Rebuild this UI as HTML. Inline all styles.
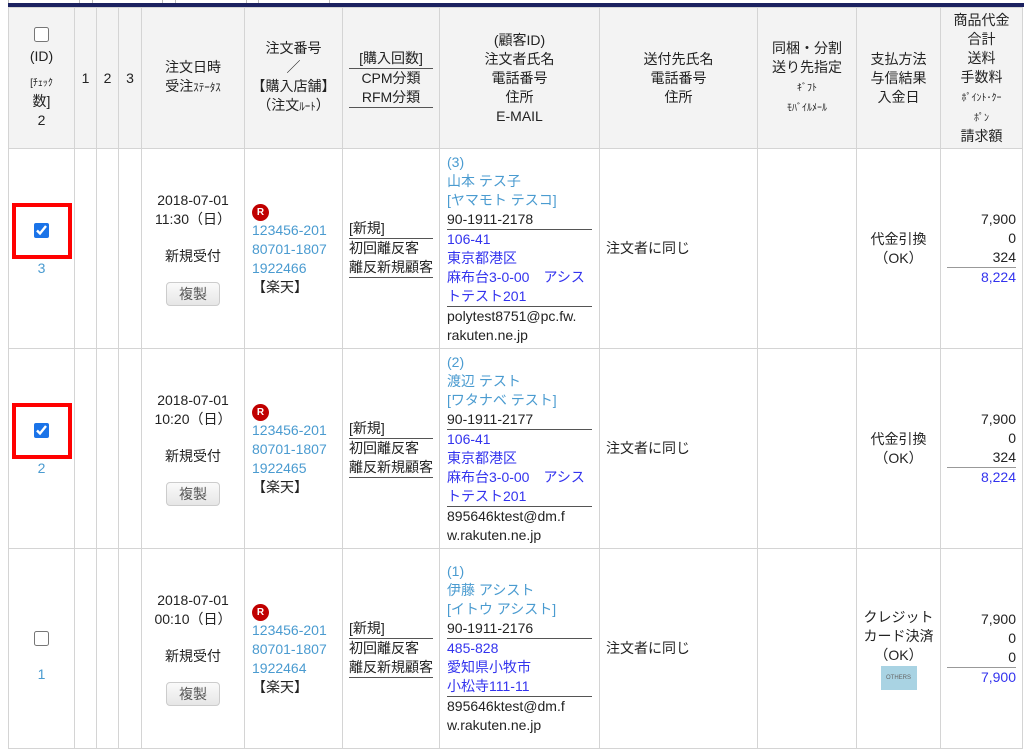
<!DOCTYPE html>
<html><head><meta charset="utf-8"><style>
*{margin:0;padding:0;box-sizing:border-box}
body{width:1024px;height:751px;overflow:hidden;background:#fff;font-family:"Liberation Sans","Noto Sans CJK JP",sans-serif;font-size:14px;color:#222;position:relative}
.tb{position:absolute;top:-2px;height:6px;border:1px solid #bbb;border-top:none;background:#fff}
.bar{position:absolute;left:8px;top:3px;width:1016px;height:4px;background:#1b2160}
table{position:absolute;left:8px;top:7px;border-collapse:collapse;table-layout:fixed;width:1014px}
td,th{border:1px solid #d4d4d4;vertical-align:middle;line-height:19px;font-weight:normal}
th{background:#f3f3f3;text-align:center;height:141px}
td{height:200px}
.c{text-align:center}
.sm{font-size:10px;line-height:16px}
.lb{color:#4a9bd0}
.bl{color:#3333ee}
.ul{border-bottom:1px solid #555}
.r{display:inline-block;width:17px;height:17px;border-radius:50%;background:#c00000;color:#fff;font-size:10px;font-weight:bold;text-align:center;line-height:17px}
.btn{display:inline-block;width:54px;height:24px;border:1px solid #ccc;border-radius:4px;background:linear-gradient(#fafafa,#e6e6e6);color:#555;line-height:22px;text-align:center}
.cb{width:15px;height:15px;accent-color:#1a73e8;margin:0}
.red{display:inline-block;width:60px;height:56px;border:4px solid #f00;padding-top:16px}
.s1{height:18px}.s2{height:16px}
</style></head><body>
<div class="tb" style="left:8px;width:72px"></div>
<div class="tb" style="left:92px;width:71px"></div>
<div class="tb" style="left:175px;width:72px"></div>
<div class="tb" style="left:258px;width:72px"></div>
<div class="bar"></div>
<table>
<colgroup><col style="width:66px"><col style="width:22px"><col style="width:22px"><col style="width:23px"><col style="width:103px"><col style="width:98px"><col style="width:97px"><col style="width:160px"><col style="width:158px"><col style="width:99px"><col style="width:84px"><col style="width:82px"></colgroup>
<tr>
<th><input type="checkbox" class="cb"><br>(ID)<br><div style="height:6px"></div><span class="sm">[ﾁｪｯｸ</span><br>数]<br>2</th>
<th>1</th><th>2</th><th>3</th>
<th>注文日時<br>受注<span style="font-size:11px">ｽﾃｰﾀｽ</span></th>
<th>注文番号<br>／<br>【購入店舗】<br>（注文<span style="font-size:11px">ﾙｰﾄ</span>）</th>
<th><div style="margin:0 6px"><div class="ul">[購入回数]</div>CPM分類<br><div class="ul">RFM分類</div></div></th>
<th>(顧客ID)<br>注文者氏名<br>電話番号<br>住所<br>E-MAIL</th>
<th>送付先氏名<br>電話番号<br>住所</th>
<th>同梱・分割<br>送り先指定<br><span class="sm">ｷﾞﾌﾄ<br>ﾓﾊﾞｲﾙﾒｰﾙ</span></th>
<th>支払方法<br>与信結果<br>入金日</th>
<th>商品代金<br>合計<br>送料<br>手数料<br><span class="sm">ﾎﾟｲﾝﾄ･ｸｰ<br>ﾎﾟﾝ</span><br>請求額</th>
</tr>
<tr>
<td class="c"><div><span class="red"><input type="checkbox" class="cb" checked></span></div><div class="lb" style="margin-bottom:16px">3</div></td>
<td></td><td></td><td></td>
<td class="c">2018-07-01<br>11:30（日）<div class="s1"></div>新規受付<div class="s2"></div><span class="btn">複製</span></td>
<td style="padding:0 7px"><span class="r">R</span><div class="lb">123456-201<br>80701-1807<br>1922466</div>【楽天】</td>
<td style="padding:0 6px"><div class="ul">[新規]</div>初回離反客<br><div class="ul">離反新規顧客</div></td>
<td style="padding:0 7px"><div class="lb">(3)<br>山本 テス子<br>[ヤマモト テスコ]</div><div class="ul">90-1911-2178</div><div class="bl ul">106-41<br>東京都港区<br>麻布台3-0-00　アシス<br>トテスト201</div>polytest8751@pc.fw.<br>rakuten.ne.jp</td>
<td style="padding:0 6px">注文者に同じ</td>
<td></td>
<td class="c">代金引換<br>（OK）</td>
<td style="text-align:right;padding:0 6px">7,900<br>0<br><div class="ul" style="border-color:#999">324</div><span class="bl">8,224</span></td>
</tr>
<tr>
<td class="c"><div><span class="red"><input type="checkbox" class="cb" checked></span></div><div class="lb" style="margin-bottom:16px">2</div></td>
<td></td><td></td><td></td>
<td class="c">2018-07-01<br>10:20（日）<div class="s1"></div>新規受付<div class="s2"></div><span class="btn">複製</span></td>
<td style="padding:0 7px"><span class="r">R</span><div class="lb">123456-201<br>80701-1807<br>1922465</div>【楽天】</td>
<td style="padding:0 6px"><div class="ul">[新規]</div>初回離反客<br><div class="ul">離反新規顧客</div></td>
<td style="padding:0 7px"><div class="lb">(2)<br>渡辺 テスト<br>[ワタナベ テスト]</div><div class="ul">90-1911-2177</div><div class="bl ul">106-41<br>東京都港区<br>麻布台3-0-00　アシス<br>トテスト201</div>895646ktest@dm.f<br>w.rakuten.ne.jp</td>
<td style="padding:0 6px">注文者に同じ</td>
<td></td>
<td class="c">代金引換<br>（OK）</td>
<td style="text-align:right;padding:0 6px">7,900<br>0<br><div class="ul" style="border-color:#999">324</div><span class="bl">8,224</span></td>
</tr>
<tr>
<td class="c" style="height:199px"><div style="margin-top:18px"><input type="checkbox" class="cb"></div><div class="lb" style="margin-top:14px">1</div></td>
<td></td><td></td><td></td>
<td class="c">2018-07-01<br>00:10（日）<div class="s1"></div>新規受付<div class="s2"></div><span class="btn">複製</span></td>
<td style="padding:0 7px"><span class="r">R</span><div class="lb">123456-201<br>80701-1807<br>1922464</div>【楽天】</td>
<td style="padding:0 6px"><div class="ul">[新規]</div>初回離反客<br><div class="ul">離反新規顧客</div></td>
<td style="padding:0 7px"><div class="lb">(1)<br>伊藤 アシスト<br>[イトウ アシスト]</div><div class="ul">90-1911-2176</div><div class="bl ul">485-828<br>愛知県小牧市<br>小松寺111-11</div>895646ktest@dm.f<br>w.rakuten.ne.jp</td>
<td style="padding:0 6px">注文者に同じ</td>
<td></td>
<td class="c">クレジット<br>カード決済<br>（OK）<br><span style="display:inline-block;width:36px;height:24px;background:#a9d3e3;font-size:6px;color:#666;line-height:24px">OTHERS</span></td>
<td style="text-align:right;padding:0 6px">7,900<br>0<br><div class="ul" style="border-color:#999">0</div><span class="bl">7,900</span></td>
</tr>
</table>
</body></html>
